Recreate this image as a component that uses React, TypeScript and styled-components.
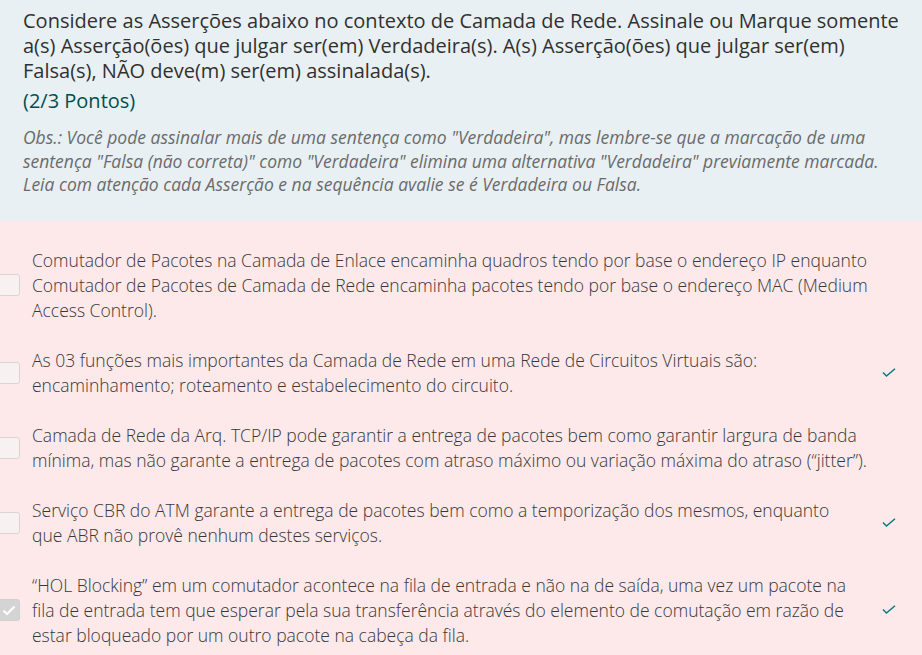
import React from "react";
import styled, { createGlobalStyle } from "styled-components";

const Global = createGlobalStyle`
  html, body { margin: 0; padding: 0; background: #fde8ea; }
  body { font-family: "Open Sans", "Noto Sans", sans-serif; }
`;

const Page = styled.div`
  width: 922px;
  height: 655px;
  overflow: hidden;
  display: flex;
  flex-direction: column;
`;

const Header = styled.div`
  background: #e8f0f3;
  padding: 8px 16px 24px 23px;
  display: flex;
  flex-direction: column;
`;

const Title = styled.div`
  font-size: 20px;
  line-height: 25px;
  color: #323130;
`;

const Points = styled.div`
  font-size: 20px;
  line-height: 25px;
  color: #004e4c;
  margin-top: 5px;
`;

const Obs = styled.div`
  font-size: 17.5px;
  line-height: 23.5px;
  font-style: italic;
  color: #6b6b6b;
  margin-top: 13px;
`;

const Options = styled.div`
  background: #fde8ea;
  padding: 27px 0 0 0;
  display: flex;
  flex-direction: column;
  gap: 25px;
`;

const Row = styled.div`
  display: flex;
  align-items: center;
`;

const Box = styled.div<{ $checked?: boolean }>`
  width: 22px;
  height: 22px;
  box-sizing: border-box;
  margin-left: -2px;
  margin-right: 12px;
  flex: none;
  border-radius: 3px;
  border: 1px solid ${(p) => (p.$checked ? "#d0d0d0" : "#ddd3d5")};
  background: ${(p) => (p.$checked ? "#d4d4d4" : "#f8f1f2")};
  display: flex;
  align-items: center;
  justify-content: center;
`;

const Text = styled.div`
  width: 848px;
  flex: none;
  font-size: 17.5px;
  line-height: 25px;
  color: #383838;
  font-weight: 300;
`;

const Line = styled.span`
  display: block;
  white-space: nowrap;
`;

const CheckCol = styled.div`
  flex: 1;
  display: flex;
  align-items: center;
  padding-left: 2px;
  box-sizing: border-box;
`;

const Tick = () => (
  <svg width="14" height="10" viewBox="0 0 14 10">
    <path d="M1 4.5 L4.5 8 L13 0.8" fill="none" stroke="#0a7b7b" strokeWidth="1.5" />
  </svg>
);

const WhiteTick = () => (
  <svg width="14" height="11" viewBox="0 0 14 11">
    <path d="M1.5 5.5 L5 9 L12.5 1.5" fill="none" stroke="#ffffff" strokeWidth="2.2" />
  </svg>
);

const titleLines = [
  "Considere as Asserções abaixo no contexto de Camada de Rede. Assinale ou Marque somente",
  "a(s) Asserção(ões) que julgar ser(em) Verdadeira(s). A(s) Asserção(ões) que julgar ser(em)",
  "Falsa(s), NÃO deve(m) ser(em) assinalada(s).",
];

const items = [
  {
    lines: [
      "Comutador de Pacotes na Camada de Enlace encaminha quadros tendo por base o endereço IP enquanto",
      "Comutador de Pacotes de Camada de Rede encaminha pacotes tendo por base o endereço MAC (Medium",
      "Access Control).",
    ],
    checked: false,
    correct: false,
  },
  {
    lines: [
      "As 03 funções mais importantes da Camada de Rede em uma Rede de Circuitos Virtuais são:",
      "encaminhamento; roteamento e estabelecimento do circuito.",
    ],
    checked: false,
    correct: true,
  },
  {
    lines: [
      "Camada de Rede da Arq. TCP/IP pode garantir a entrega de pacotes bem como garantir largura de banda",
      "mínima, mas não garante a entrega de pacotes com atraso máximo ou variação máxima do atraso (“jitter”).",
    ],
    checked: false,
    correct: false,
  },
  {
    lines: [
      "Serviço CBR do ATM garante a entrega de pacotes bem como a temporização dos mesmos, enquanto",
      "que ABR não provê nenhum destes serviços.",
    ],
    checked: false,
    correct: true,
  },
  {
    lines: [
      "“HOL Blocking” em um comutador acontece na fila de entrada e não na de saída, uma vez um pacote na",
      "fila de entrada tem que esperar pela sua transferência através do elemento de comutação em razão de",
      "estar bloqueado por um outro pacote na cabeça da fila.",
    ],
    checked: true,
    correct: true,
  },
];

export default function App() {
  return (
    <Page>
      <Global />
      <Header>
        <Title>
          {titleLines.map((l, j) => (
            <Line key={j}>{l}</Line>
          ))}
        </Title>
        <Points>(2/3 Pontos)</Points>
        <Obs>
          Obs.: Você pode assinalar mais de uma sentença como "Verdadeira", mas lembre-se que a marcação de uma sentença "Falsa (não correta)" como "Verdadeira" elimina uma alternativa "Verdadeira" previamente marcada. Leia com atenção cada Asserção e na sequência avalie se é Verdadeira ou Falsa.
        </Obs>
      </Header>
      <Options>
        {items.map((it, i) => (
          <Row key={i}>
            <Box $checked={it.checked}>{it.checked && <WhiteTick />}</Box>
            <Text>
              {it.lines.map((l, j) => (
                <Line key={j}>{l}</Line>
              ))}
            </Text>
            <CheckCol>{it.correct && <Tick />}</CheckCol>
          </Row>
        ))}
      </Options>
    </Page>
  );
}
